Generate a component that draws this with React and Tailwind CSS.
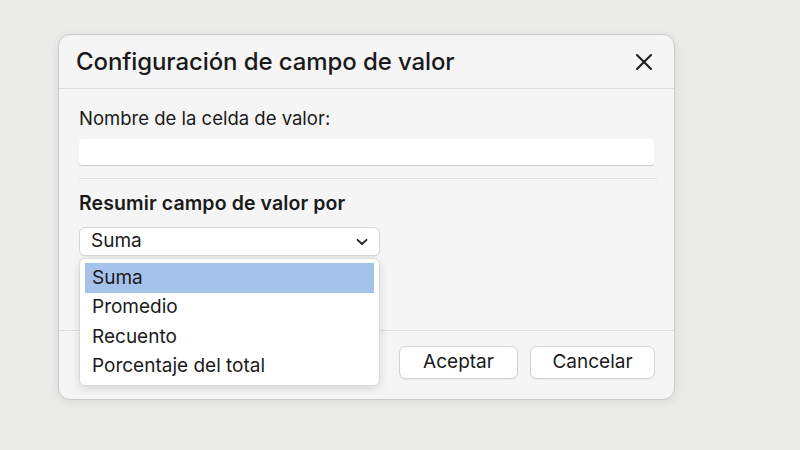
import React from 'react';

const font = { fontFamily: 'Inter, "Noto Sans", "Liberation Sans", sans-serif' };

function CloseIcon() {
    return (
        <svg width="18" height="18" viewBox="0 0 18 18" fill="none" stroke="#1c1c1c" strokeWidth="2" strokeLinecap="round">
            <path d="M2 2 L16 16 M16 2 L2 16" />
        </svg>
    );
}

function Chevron() {
    return (
        <svg width="12" height="8" viewBox="0 0 12 8" fill="none" stroke="#222" strokeWidth="1.8" strokeLinecap="round" strokeLinejoin="round">
            <path d="M1.5 1.8 L6 6 L10.5 1.8" />
        </svg>
    );
}

export default function App() {
    const options = ['Suma', 'Promedio', 'Recuento', 'Porcentaje del total'];

    return (
        <div className="w-[800px] h-[450px] bg-[#ebebea] pt-[34px] pl-[58px] overflow-hidden" style={font}>
            <div className="w-[617px] h-[366px] bg-[#f5f5f5] rounded-[12px] border border-[#cbcbcb] shadow-[0_2px_10px_rgba(0,0,0,0.08)] flex flex-col text-[#1a1a1a]">
                {/* header */}
                <div className="h-[54px] flex items-center justify-between pl-[17px] pr-[17px] border-b border-[#dcdcdc]">
                    <h1 className="text-[24px] font-medium tracking-[-0.1px] leading-[28px]">Configuración de campo de valor</h1>
                    <button className="p-1"><CloseIcon /></button>
                </div>

                {/* body */}
                <div className="flex-1 px-[20px] pt-[18px] relative">
                    <label className="block text-[18.5px] leading-[23px]">Nombre de la celda de valor:</label>
                    <div className="mt-[9px] w-[575px] h-[26px] bg-white rounded-[3px] shadow-[0_1px_1px_rgba(0,0,0,0.18)]" />
                    <div className="mt-[13px] w-[578px] border-t border-[#dedede]" />
                    <p className="mt-[12px] text-[19.5px] leading-[24px] font-semibold tracking-[0.1px]">Resumir campo de valor por</p>

                    <div className="relative mt-[12px] w-[301px]">
                        <div className="h-[29px] bg-white rounded-[6px] border border-[#d6d6d6] shadow-[0_1px_1px_rgba(0,0,0,0.06)] flex items-center justify-between pl-[11px] pr-[11px]">
                            <span className="text-[19px]">Suma</span>
                            <Chevron />
                        </div>

                        {/* dropdown menu */}
                        <div className="absolute left-0 top-[31px] w-[301px] bg-white rounded-[6px] border border-[#dadada] shadow-[0_3px_10px_rgba(0,0,0,0.12)] py-[4px] px-[5px] z-10">
                            {options.map((o, i) => (
                                <div
                                    key={o}
                                    className={
                                        'h-[29.5px] flex items-center pl-[7px] text-[19px] ' +
                                        (i === 0 ? 'bg-[#a5c3ea]' : '')
                                    }
                                >
                                    {o}
                                </div>
                            ))}
                        </div>
                    </div>
                </div>

                {/* footer */}
                <div className="h-[69px] border-t border-[#dcdcdc] flex justify-end items-start pt-[15px] pr-[19px] gap-[12px]">
                    <button className="w-[119px] h-[33px] bg-white rounded-[7px] border border-[#d4d4d4] shadow-[0_1px_1px_rgba(0,0,0,0.06)] text-[19px]">Aceptar</button>
                    <button className="w-[125px] h-[33px] bg-white rounded-[7px] border border-[#d4d4d4] shadow-[0_1px_1px_rgba(0,0,0,0.06)] text-[19px]">Cancelar</button>
                </div>
            </div>
        </div>
    );
}
